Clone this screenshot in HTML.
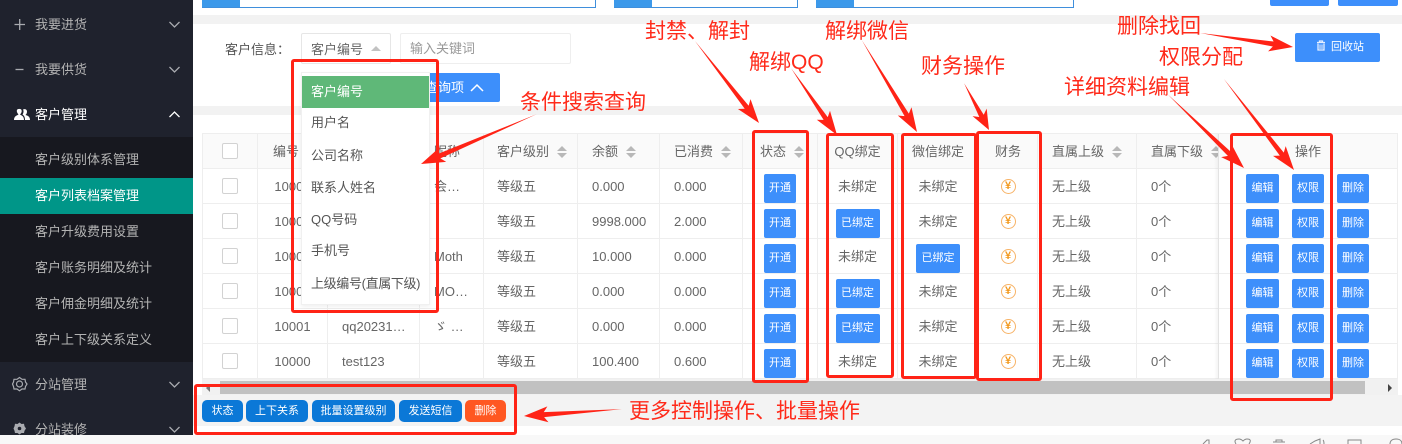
<!DOCTYPE html>
<html><head><meta charset="utf-8">
<style>
*{box-sizing:border-box}
html,body{margin:0;padding:0;width:1402px;height:444px;overflow:hidden;background:#fff;font-family:"Liberation Sans","Noto Sans CJK SC",sans-serif;font-size:13px;color:#666}
.a{position:absolute}
#side{left:0;top:0;width:193px;height:435px;background:#1f222d;overflow:hidden}
#sub{left:0;top:137px;width:193px;height:225px;background:#17181f}
#act{left:0;top:178px;width:193px;height:36px;background:#009688}
.m{position:absolute;left:35px;height:20px;line-height:20px;color:#b3b3b3;font-size:13px;white-space:nowrap}
.t{position:absolute;left:202px;top:133px;width:1196px;border-collapse:separate;border-spacing:0;table-layout:fixed;border-top:1px solid #eee;border-left:1px solid #eee}
.t td,.t th{height:35px;padding:0 0 0 14px;border-right:1px solid #eee;border-bottom:1px solid #eee;font-weight:400;text-align:left;white-space:nowrap;overflow:hidden;font-size:13px;color:#666;line-height:33px}
.t th{background:#fafafa}
.t .c{padding:0;text-align:center}
.cb{display:block;width:16px;height:16px;margin:0 auto;border:1px solid #d2d2d2;border-radius:2px;background:#fff}
.s{display:inline-block;position:relative;width:10px;height:12px;margin-left:8px;vertical-align:-2px}
.s:before,.s:after{content:"";position:absolute;left:0;border-left:5px solid transparent;border-right:5px solid transparent}
.s:before{top:0;border-bottom:5px solid #b8b8b8}
.s:after{bottom:0;border-top:5px solid #b8b8b8}
.b{display:block;height:29px;line-height:29px;margin:5px auto 0;background:#3d8ffb;color:#fff;font-size:11px;text-align:center;border-radius:2px}
.w32{width:32px}.w44{width:44px}
.op{position:relative}
.op .b{position:absolute;top:0;width:32px;margin-top:5px}
.y{display:block;width:15px;height:15px;margin:0 auto;border:1px solid #f7b367;border-radius:50%;color:#f39a1f;font-size:11px;font-weight:700;font-style:normal;line-height:13px;text-align:center}
.dd{position:absolute;left:302px;height:32px;line-height:32px;padding-left:9px;width:127px;color:#555;font-size:13px;white-space:nowrap}
.fb{position:absolute;top:400px;height:22px;line-height:22px;border-radius:5px;background:#0b78d7;color:#fff;font-size:11px;text-align:center}
.n{position:absolute;color:#ff2a1a;font-size:21px;line-height:24px;white-space:nowrap;font-family:"Liberation Sans","WenQuanYi Zen Hei","Noto Sans CJK SC",sans-serif}
.r{position:absolute;border:3px solid #ff2316;border-radius:3px}
</style></head><body>

<div class="a" style="left:193px;top:0;width:1209px;height:15px;background:#fff"></div>
<div class="a" style="left:202px;top:0;width:394px;height:8px;border:1px solid #3f8fdc;border-top:0"></div>
<div class="a" style="left:202px;top:0;width:38px;height:7px;background:#3c99ea"></div>
<div class="a" style="left:614px;top:0;width:184px;height:8px;border:1px solid #3f8fdc;border-top:0"></div>
<div class="a" style="left:614px;top:0;width:38px;height:7px;background:#3c99ea"></div>
<div class="a" style="left:816px;top:0;width:258px;height:8px;border:1px solid #3f8fdc;border-top:0"></div>
<div class="a" style="left:816px;top:0;width:38px;height:7px;background:#3c99ea"></div>
<div class="a" style="left:1270px;top:0;width:59px;height:6px;background:#3d8ffb;border-radius:0 0 2px 2px"></div>
<div class="a" style="left:1338px;top:0;width:60px;height:6px;background:#3d8ffb;border-radius:0 0 2px 2px"></div>
<div class="a" style="left:193px;top:15px;width:1209px;height:9px;background:#f2f2f2"></div>
<div class="a" style="left:193px;top:106px;width:1209px;height:9px;background:#f2f2f2"></div>

<div class="a" style="left:225px;top:40px;line-height:20px;color:#555;white-space:nowrap">客户信息：</div>
<div class="a" style="left:301px;top:33px;width:90px;height:31px;border:1px solid #e6e6e6;border-radius:2px;padding-left:9px;line-height:31px;color:#666">客户编号</div>
<div class="a" style="left:371px;top:46px;width:0;height:0;border-left:5.5px solid transparent;border-right:5.5px solid transparent;border-bottom:5.5px solid #c2c2c2"></div>
<div class="a" style="left:400px;top:33px;width:171px;height:31px;border:1px solid #eee;border-radius:2px;padding-left:9px;line-height:29px;color:#999">输入关键词</div>
<div class="a" style="left:400px;top:73px;width:100px;height:29px;background:#3d8ffb;border-radius:2px;color:#fff;line-height:29px;padding-left:25px;white-space:nowrap">查询项
<svg width="14" height="9" style="margin-left:2px" viewBox="0 0 14 9"><path d="M1 8 7 2 13 8" fill="none" stroke="#fff" stroke-width="1.5"/></svg></div>
<div class="a" style="left:1295px;top:33px;width:85px;height:29px;background:#3d8ffb;border-radius:2px;color:#fff;line-height:29px;font-size:11px;padding-left:21px;white-space:nowrap"><svg width="10" height="11" viewBox="0 0 10 11" style="vertical-align:-1px;margin-right:5px"><path d="M1 2.500H9M3.500 2.500V1H6.500V2.500M2 3.500V10H8V3.500" fill="none" stroke="#e5efff" stroke-width="1.300"/><path d="M4 4.500V9M6 4.500V9" stroke="#e5efff"/></svg>回收站</div>

<table class="t">
<colgroup><col style="width:55px"><col style="width:70px"><col style="width:92px"><col style="width:64px"><col style="width:94px"><col style="width:82px"><col style="width:83px"><col style="width:75px"><col style="width:80px"><col style="width:81px"><col style="width:59px"><col style="width:99px"><col style="width:82px"><col></colgroup>
<tr><th class="c"><i class="cb"></i></th><th style="padding-left:15px">编号<i class="s"></i></th><th>用户名</th><th>昵称</th><th style="padding-left:13px">客户级别<i class="s"></i></th><th>余额<i class="s"></i></th><th>已消费<i class="s"></i></th><th style="padding-left:17px">状态<i class="s"></i></th><th class="c">QQ绑定</th><th class="c">微信绑定</th><th class="c">财务</th><th>直属上级<i class="s"></i></th><th>直属下级<i class="s"></i></th><th class="c">操作</th></tr>
<tr><td class="c"><i class="cb"></i></td><td class="c">10005</td><td>user01</td><td>会…</td><td style="padding-left:13px">等级五</td><td>0.000</td><td>0.000</td><td class="c"><span class="b w32">开通</span></td><td class="c">未绑定</td><td class="c">未绑定</td><td class="c"><i class="y">¥</i></td><td>无上级</td><td>0个</td><td class="c op"><span class="b" style="left:27px;width:33px">编辑</span><span class="b" style="left:73px">权限</span><span class="b" style="left:118px">删除</span></td></tr>
<tr><td class="c"><i class="cb"></i></td><td class="c">10004</td><td>user02</td><td></td><td style="padding-left:13px">等级五</td><td>9998.000</td><td>2.000</td><td class="c"><span class="b w32">开通</span></td><td class="c"><span class="b w44">已绑定</span></td><td class="c">未绑定</td><td class="c"><i class="y">¥</i></td><td>无上级</td><td>0个</td><td class="c op"><span class="b" style="left:27px;width:33px">编辑</span><span class="b" style="left:73px">权限</span><span class="b" style="left:118px">删除</span></td></tr>
<tr><td class="c"><i class="cb"></i></td><td class="c">10003</td><td>user03</td><td>Moth</td><td style="padding-left:13px">等级五</td><td>10.000</td><td>0.000</td><td class="c"><span class="b w32">开通</span></td><td class="c">未绑定</td><td class="c"><span class="b w44">已绑定</span></td><td class="c"><i class="y">¥</i></td><td>无上级</td><td>0个</td><td class="c op"><span class="b" style="left:27px;width:33px">编辑</span><span class="b" style="left:73px">权限</span><span class="b" style="left:118px">删除</span></td></tr>
<tr><td class="c"><i class="cb"></i></td><td class="c">10002</td><td>user04</td><td>MO…</td><td style="padding-left:13px">等级五</td><td>0.000</td><td>0.000</td><td class="c"><span class="b w32">开通</span></td><td class="c"><span class="b w44">已绑定</span></td><td class="c">未绑定</td><td class="c"><i class="y">¥</i></td><td>无上级</td><td>0个</td><td class="c op"><span class="b" style="left:27px;width:33px">编辑</span><span class="b" style="left:73px">权限</span><span class="b" style="left:118px">删除</span></td></tr>
<tr><td class="c"><i class="cb"></i></td><td class="c">10001</td><td>qq20231…</td><td>ゞ …</td><td style="padding-left:13px">等级五</td><td>0.000</td><td>0.000</td><td class="c"><span class="b w32">开通</span></td><td class="c"><span class="b w44">已绑定</span></td><td class="c">未绑定</td><td class="c"><i class="y">¥</i></td><td>无上级</td><td>0个</td><td class="c op"><span class="b" style="left:27px;width:33px">编辑</span><span class="b" style="left:73px">权限</span><span class="b" style="left:118px">删除</span></td></tr>
<tr><td class="c"><i class="cb"></i></td><td class="c">10000</td><td>test123</td><td></td><td style="padding-left:13px">等级五</td><td>100.400</td><td>0.600</td><td class="c"><span class="b w32">开通</span></td><td class="c">未绑定</td><td class="c">未绑定</td><td class="c"><i class="y">¥</i></td><td>无上级</td><td>0个</td><td class="c op"><span class="b" style="left:27px;width:33px">编辑</span><span class="b" style="left:73px">权限</span><span class="b" style="left:118px">删除</span></td></tr>
</table>
<div class="a" style="left:1214px;top:134px;width:5px;height:245px;background:linear-gradient(to right,rgba(0,0,0,0),rgba(0,0,0,.05))"></div>

<div class="a" style="left:202px;top:379px;width:1196px;height:16px;background:#f1f1f1"></div>
<div class="a" style="left:220px;top:381px;width:1145px;height:13px;background:#c1c1c1"></div>
<div class="a" style="left:206px;top:384px;width:0;height:0;border-top:4px solid transparent;border-bottom:4px solid transparent;border-right:4px solid #777"></div>
<div class="a" style="left:1388px;top:384px;width:0;height:0;border-top:4px solid transparent;border-bottom:4px solid transparent;border-left:4px solid #444"></div>
<div class="a" style="left:193px;top:395px;width:1209px;height:31px;background:#f3f3f3"></div>
<div class="a" style="left:193px;top:426px;width:1209px;height:7px;background:#fff"></div>
<div class="a" style="left:0;top:435px;width:1402px;height:9px;background:#f8f8f8"></div>
<svg class="a" style="left:1190px;top:438px" width="212" height="6" viewBox="0 0 212 6"><g fill="none" stroke="#888" stroke-width="1"><path d="M13 6 17 2H19V6"/><path d="M46 6C44 3 45 1 49 1 51 1 52 2 53 3 54 2 55 1 57 1 61 1 61 3 59 6"/><path d="M83 4H95M86 4V2H92V4"/><path d="M120 6 125 3 130 1V6M133 2C134 3 134 4 134 6"/><path d="M158 6V2H171V6"/><path d="M200 6C200 3 202 1 206 1 210 1 212 3 212 6"/></g></svg>

<div class="a" id="side">
<div class="a" id="sub"></div>
<div class="a" id="act"></div>
<div class="m" style="top:15px">我要进货</div>
<div class="m" style="top:60px">我要供货</div>
<div class="m" style="top:105px;color:#fff">客户管理</div>
<div class="m" style="top:150px">客户级别体系管理</div>
<div class="m" style="top:186px;color:#fff">客户列表档案管理</div>
<div class="m" style="top:222px">客户升级费用设置</div>
<div class="m" style="top:258px">客户账务明细及统计</div>
<div class="m" style="top:294px">客户佣金明细及统计</div>
<div class="m" style="top:330px">客户上下级关系定义</div>
<div class="m" style="top:375px">分站管理</div>
<div class="m" style="top:420px">分站装修</div>
<svg class="a" style="left:0;top:0" width="193" height="435" viewBox="0 0 193 435">
<g fill="none" stroke="#a9abb0" stroke-width="1.300">
<path d="M14.500 24.500H25M19.700 19V30"/>
<path d="M15.500 69.500H23.500"/>
<path d="M169.500 22 174.500 27 179.500 22"/>
<path d="M169.500 67 174.500 72 179.500 67"/>
<path d="M169.500 382 174.500 387 179.500 382"/>
<path d="M169.500 427 174.500 432 179.500 427"/>
</g>
<path d="M169.500 117 174.500 112 179.500 117" fill="none" stroke="#fff" stroke-width="1.300"/>
<path d="M14 120C14 116 17 115.500 18.500 114.500 17 113 16.500 111 17 110 17.500 108.500 21 108.500 21.500 110 22 111.500 21.500 113 20 114.500 21.500 115.500 24 116 24 120ZM25 120C25 117 24 115.500 22.500 114.800 23.500 113 24 111 23 109.500 25.500 108.500 27 110 27 111.500 27 113 26.500 114 25.500 115 27 115.500 30 116 30 120Z" fill="#fff"/>
<g fill="none" stroke="#a9abb0" stroke-width="1.200"><circle cx="19.500" cy="384" r="3"/><path d="M19.500 377.500 22 379.300 25 379.300 25.500 382 27 384 25.500 386.500 25 389 22 389 19.500 390.800 17 389 14 389 13.500 386.500 12.500 384 13.500 382 14 379.300 17 379.300Z"/></g>
<path d="M19.500 422.500 21.500 424 24 423.800 24.500 426.300 26 428.500 24.500 430.700 24 433 21.500 433 19.500 434.500 17.500 433 15 433 14.500 430.700 13.500 428.500 14.500 426.300 15 423.800 17.500 424Z" fill="#a9abb0"/><circle cx="19.500" cy="428.500" r="1.800" fill="#1f222d"/>
</svg>
</div>

<div class="a" style="left:301px;top:72px;width:129px;height:233px;background:#fff;border:1px solid #f0f0f0;box-shadow:0 2px 4px rgba(0,0,0,.06)"></div>
<div class="dd" style="top:76px;background:#5fb878;color:#fff">客户编号</div>
<div class="dd" style="top:107px">用户名</div>
<div class="dd" style="top:140px">公司名称</div>
<div class="dd" style="top:172px">联系人姓名</div>
<div class="dd" style="top:204px">QQ号码</div>
<div class="dd" style="top:235px">手机号</div>
<div class="dd" style="top:268px;letter-spacing:-.35px">上级编号(直属下级)</div>

<div class="fb" style="left:202px;width:41px;line-height:23px">状态</div>
<div class="fb" style="left:246px;width:62px;line-height:23px">上下关系</div>
<div class="fb" style="left:312px;width:83px;line-height:23px">批量设置级别</div>
<div class="fb" style="left:399px;width:63px;line-height:23px">发送短信</div>
<div class="fb" style="left:465px;width:41px;line-height:23px;background:#ff5722">删除</div>

<div class="r" style="left:291px;top:59px;width:148px;height:254px"></div>
<div class="r" style="left:194px;top:384px;width:323px;height:51px"></div>
<div class="r" style="left:752px;top:130px;width:57px;height:253px"></div>
<div class="r" style="left:826px;top:133px;width:68px;height:245px"></div>
<div class="r" style="left:901px;top:133px;width:76px;height:246px"></div>
<div class="r" style="left:976px;top:131px;width:66px;height:250px"></div>
<div class="r" style="left:1230px;top:133px;width:103px;height:268px"></div>

<svg class="a" style="left:0;top:0" width="1402" height="444" viewBox="0 0 1402 444">
<g fill="#ff2316">
<g transform="translate(421,164) rotate(156.700)"><polygon points="-126,0 -20,-2.500 -24,-8 0,0 -24,8 -20,2.500"/></g>
<g transform="translate(759,123) rotate(52)"><polygon points="-104,0 -20,-2.500 -24,-8 0,0 -24,8 -20,2.500"/></g>
<g transform="translate(837,135) rotate(55.500)"><polygon points="-81,0 -20,-2.500 -24,-8 0,0 -24,8 -20,2.500"/></g>
<g transform="translate(917,132) rotate(59)"><polygon points="-107,0 -20,-2.500 -24,-8 0,0 -24,8 -20,2.500"/></g>
<g transform="translate(989,130) rotate(62)"><polygon points="-53,0 -16,-2.500 -20,-8 0,0 -20,8 -16,2.500"/></g>
<g transform="translate(1293,47) rotate(8.600)"><polygon points="-94,0 -20,-2.500 -24,-8 0,0 -24,8 -20,2.500"/></g>
<g transform="translate(1294,170) rotate(52.400)"><polygon points="-115,0 -20,-2.500 -24,-8 0,0 -24,8 -20,2.500"/></g>
<g transform="translate(1244,168) rotate(44)"><polygon points="-106,0 -20,-2.500 -24,-8 0,0 -24,8 -20,2.500"/></g>
<g transform="translate(524,416) rotate(176)"><polygon points="-98,0 -20,-2.500 -24,-8 0,0 -24,8 -20,2.500"/></g>
</g></svg>

<div class="n" style="left:645px;top:20px">封禁、解封</div>
<div class="n" style="left:749px;top:51px">解绑QQ</div>
<div class="n" style="left:825px;top:20px">解绑微信</div>
<div class="n" style="left:520px;top:91px">条件搜索查询</div>
<div class="n" style="left:921px;top:55px">财务操作</div>
<div class="n" style="left:1064px;top:76px">详细资料编辑</div>
<div class="n" style="left:1117px;top:15px">删除找回</div>
<div class="n" style="left:1159px;top:46px">权限分配</div>
<div class="n" style="left:629px;top:400px">更多控制操作、批量操作</div>
</body></html>
